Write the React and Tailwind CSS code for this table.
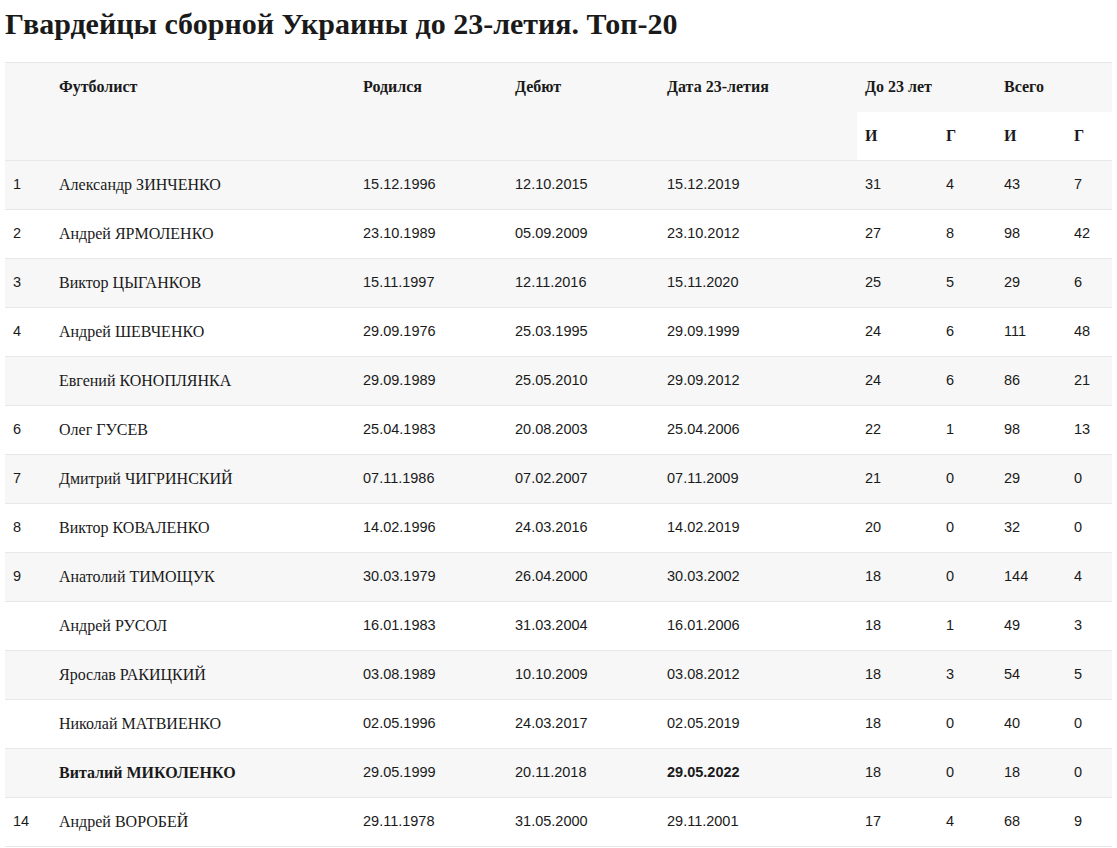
const rows = [
  { n: "1", name: "Александр ЗИНЧЕНКО", born: "15.12.1996", debut: "12.10.2015", d23: "15.12.2019", i23: "31", g23: "4", i: "43", g: "7" },
  { n: "2", name: "Андрей ЯРМОЛЕНКО", born: "23.10.1989", debut: "05.09.2009", d23: "23.10.2012", i23: "27", g23: "8", i: "98", g: "42" },
  { n: "3", name: "Виктор ЦЫГАНКОВ", born: "15.11.1997", debut: "12.11.2016", d23: "15.11.2020", i23: "25", g23: "5", i: "29", g: "6" },
  { n: "4", name: "Андрей ШЕВЧЕНКО", born: "29.09.1976", debut: "25.03.1995", d23: "29.09.1999", i23: "24", g23: "6", i: "111", g: "48" },
  { n: "", name: "Евгений КОНОПЛЯНКА", born: "29.09.1989", debut: "25.05.2010", d23: "29.09.2012", i23: "24", g23: "6", i: "86", g: "21" },
  { n: "6", name: "Олег ГУСЕВ", born: "25.04.1983", debut: "20.08.2003", d23: "25.04.2006", i23: "22", g23: "1", i: "98", g: "13" },
  { n: "7", name: "Дмитрий ЧИГРИНСКИЙ", born: "07.11.1986", debut: "07.02.2007", d23: "07.11.2009", i23: "21", g23: "0", i: "29", g: "0" },
  { n: "8", name: "Виктор КОВАЛЕНКО", born: "14.02.1996", debut: "24.03.2016", d23: "14.02.2019", i23: "20", g23: "0", i: "32", g: "0" },
  { n: "9", name: "Анатолий ТИМОЩУК", born: "30.03.1979", debut: "26.04.2000", d23: "30.03.2002", i23: "18", g23: "0", i: "144", g: "4" },
  { n: "", name: "Андрей РУСОЛ", born: "16.01.1983", debut: "31.03.2004", d23: "16.01.2006", i23: "18", g23: "1", i: "49", g: "3" },
  { n: "", name: "Ярослав РАКИЦКИЙ", born: "03.08.1989", debut: "10.10.2009", d23: "03.08.2012", i23: "18", g23: "3", i: "54", g: "5" },
  { n: "", name: "Николай МАТВИЕНКО", born: "02.05.1996", debut: "24.03.2017", d23: "02.05.2019", i23: "18", g23: "0", i: "40", g: "0" },
  { n: "", name: "Виталий МИКОЛЕНКО", born: "29.05.1999", debut: "20.11.2018", d23: "29.05.2022", i23: "18", g23: "0", i: "18", g: "0", bold: true },
  { n: "14", name: "Андрей ВОРОБЕЙ", born: "29.11.1978", debut: "31.05.2000", d23: "29.11.2001", i23: "17", g23: "4", i: "68", g: "9" },
];

const serif = "font-['Liberation_Serif',serif]";
const num = "font-['Liberation_Sans',Arial,sans-serif] text-[14.5px]";

export default function App() {
  return (
    <div className="bg-white px-[5px] pt-[5px] text-[#1a1a1a]">
      <h1 className={`${serif} text-[30px] font-bold leading-[38px] mb-[19px]`}>
        Гвардейцы сборной Украины до 23-летия. Топ-20
      </h1>
      <table className="w-full border-collapse text-left">
        <colgroup>
          <col className="w-[46px]" />
          <col className="w-[304px]" />
          <col className="w-[152px]" />
          <col className="w-[152px]" />
          <col className="w-[198px]" />
          <col className="w-[81px]" />
          <col className="w-[58px]" />
          <col className="w-[70px]" />
          <col className="w-[46px]" />
        </colgroup>
        <thead className={`${serif} text-[16px] font-bold`}>
          <tr className="bg-[#f7f7f7] border-t border-[#e8e8e8]">
            <th rowSpan={2} className="px-2 pt-[12px] align-top"></th>
            <th rowSpan={2} className="px-2 pt-[12px] align-top font-bold">Футболист</th>
            <th rowSpan={2} className="px-2 pt-[12px] align-top font-bold">Родился</th>
            <th rowSpan={2} className="px-2 pt-[12px] align-top font-bold">Дебют</th>
            <th rowSpan={2} className="px-2 pt-[12px] align-top font-bold">Дата 23-летия</th>
            <th colSpan={2} className="px-2 h-[49px] align-middle font-bold">До 23 лет</th>
            <th colSpan={2} className="px-2 h-[49px] align-middle font-bold">Всего</th>
          </tr>
          <tr className="border-b border-[#e8e8e8]">
            <th className="bg-white px-2 h-[49px] font-bold">И</th>
            <th className="bg-white px-2 h-[49px] font-bold">Г</th>
            <th className="bg-white px-2 h-[49px] font-bold">И</th>
            <th className="bg-white px-2 h-[49px] font-bold">Г</th>
          </tr>
        </thead>
        <tbody>
          {rows.map((r, idx) => (
            <tr key={idx} className={`border-b border-[#e8e8e8] ${idx % 2 === 0 ? "bg-[#f7f7f7]" : "bg-white"}`}>
              <td className={`${num} px-2 h-[49px]`}>{r.n}</td>
              <td className={`${serif} text-[16px] px-2 ${r.bold ? "font-bold" : ""}`}>{r.name}</td>
              <td className={`${num} px-2`}>{r.born}</td>
              <td className={`${num} px-2`}>{r.debut}</td>
              <td className={`${num} px-2 ${r.bold ? "font-bold" : ""}`}>{r.d23}</td>
              <td className={`${num} px-2`}>{r.i23}</td>
              <td className={`${num} px-2`}>{r.g23}</td>
              <td className={`${num} px-2`}>{r.i}</td>
              <td className={`${num} px-2`}>{r.g}</td>
            </tr>
          ))}
        </tbody>
      </table>
    </div>
  );
}
